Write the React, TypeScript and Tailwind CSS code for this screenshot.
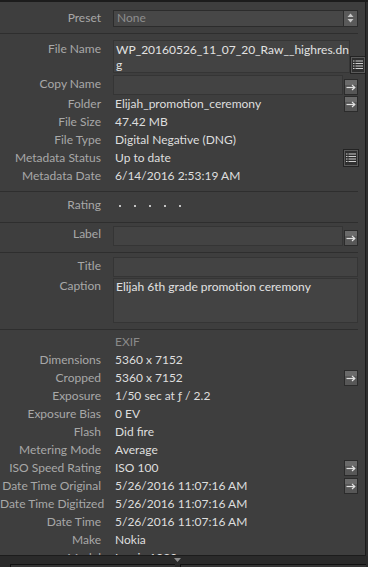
import type { ReactNode } from "react";

const font = { fontFamily: "Lato, 'Noto Sans', sans-serif" };

const ArrowButton = () => (
  <div className="flex h-[16px] w-[14px] items-center justify-center border border-[#2b2b2b] bg-[linear-gradient(#6a6a6a_0%,#6a6a6a_35%,#575757_36%,#575757_100%)]">
    <svg width="10" height="7" viewBox="0 0 10 7">
      <path d="M0.5 3.5H8.5" stroke="#e2e2e2" strokeWidth="1.2" />
      <path d="M6 1L8.8 3.5L6 6" stroke="#e2e2e2" strokeWidth="1.2" fill="none" />
    </svg>
  </div>
);

const ListButton = () => (
  <div className="flex h-[16px] w-[14px] items-center justify-center border border-[#5a5a5a] bg-[#2f2f2f] outline outline-1 outline-[#232323]">
    <svg width="10" height="10" viewBox="0 0 10 10">
      {[1, 3.5, 6, 8.5].map((y) => (
        <g key={y}>
          <rect x="0" y={y - 0.5} width="1.5" height="1" fill="#cfcfcf" />
          <rect x="2.5" y={y - 0.5} width="7.5" height="1" fill="#cfcfcf" />
        </g>
      ))}
    </svg>
  </div>
);

const Divider = () => <div className="h-px bg-[#2e2e2e]" />;

const Row = ({ label, children, icon }: { label: string; children?: ReactNode; icon?: ReactNode }) => (
  <div className="flex h-[18px] items-center">
    <div className="w-[101px] shrink-0 whitespace-nowrap text-right text-[#a8a8a8]">{label}</div>
    <div className="ml-[14px] flex-1 whitespace-nowrap text-[#dedede]">{children}</div>
    <div className="flex w-[14px] shrink-0 justify-center">{icon}</div>
  </div>
);

const rows: [string, string, ReactNode?][] = [
  ["Dimensions", "5360 x 7152"],
  ["Cropped", "5360 x 7152", <ArrowButton />],
  ["Exposure", "1/50 sec at ƒ / 2.2"],
  ["Exposure Bias", "0 EV"],
  ["Flash", "Did fire"],
  ["Metering Mode", "Average"],
  ["ISO Speed Rating", "ISO 100", <ArrowButton />],
  ["Date Time Original", "5/26/2016 11:07:16 AM", <ArrowButton />],
  ["Date Time Digitized", "5/26/2016 11:07:16 AM"],
  ["Date Time", "5/26/2016 11:07:16 AM"],
  ["Make", "Nokia"],
  ["Model", "Lumia 1020"],
];

export default function App() {
  return (
    <div className="flex h-[567px] w-[368px] flex-col overflow-hidden bg-[#2e2e2e] text-[12px]" style={font}>
      <div className="h-[2px] shrink-0 bg-[#1c1c1c]" />
      <div className="h-[554px] w-[366px] shrink-0 overflow-hidden border-r border-b border-[#1c1c1c] bg-[#3e3e3e] pr-[7px]">
        {/* preset */}
        <div className="flex h-[31px] items-center pt-px">
          <div className="w-[101px] text-right text-[#a8a8a8]">Preset</div>
          <div className="ml-[12px] flex h-[17px] flex-1 items-center border border-[#2c2c2c] bg-[#474747]">
            <span className="flex-1 pl-[3px] text-[#8e8e8e]">None</span>
            <div className="flex h-full w-[14px] items-center justify-center border-l border-[#2c2c2c] bg-[#5a5a5a]">
              <svg width="7" height="10" viewBox="0 0 7 10">
                <path d="M3.5 0.5L6.5 4H0.5Z" fill="#c8c8c8" />
                <path d="M3.5 9.5L6.5 6H0.5Z" fill="#c8c8c8" />
              </svg>
            </div>
          </div>
        </div>
        <Divider />

        {/* file */}
        <div className="pt-[6px] pb-[6px]">
          <div className="flex">
            <div className="w-[101px] shrink-0 pt-[1px] text-right leading-[15px] text-[#a8a8a8]">File Name</div>
            <div className="ml-[12px] h-[33px] flex-1 border border-[#353535] bg-[#434343] pt-px pl-[2px] leading-[15px] text-[#e2e2e2]">
              WP_20160526_11_07_20_Raw__highres.dn
              <br />g
            </div>
            <div className="ml-px flex w-[14px] shrink-0 items-end">
              <ListButton />
            </div>
          </div>
          <div className="mt-[2px] flex">
            <div className="w-[101px] shrink-0 pt-[1px] text-right leading-[15px] text-[#a8a8a8]">Copy Name</div>
            <div className="ml-[12px] h-[20px] flex-1 border border-[#353535] bg-[#434343]" />
            <div className="ml-px flex w-[14px] shrink-0 items-end">
              <ArrowButton />
            </div>
          </div>
          <Row label="Folder" icon={<ArrowButton />}>
            Elijah_promotion_ceremony
          </Row>
          <Row label="File Size">47.42 MB</Row>
          <Row label="File Type">Digital Negative (DNG)</Row>
          <Row label="Metadata Status" icon={<ListButton />}>
            Up to date
          </Row>
          <Row label="Metadata Date">6/14/2016 2:53:19 AM</Row>
        </div>
        <Divider />

        {/* rating */}
        <div className="flex h-[30px] items-center pb-[5px]">
          <div className="w-[101px] text-right text-[#a8a8a8]">Rating</div>
          <div className="ml-[18px] flex gap-[13px] pt-[3px]">
            {[0, 1, 2, 3, 4].map((i) => (
              <span key={i} className="h-[2px] w-[2px] bg-[#c4c4c4]" />
            ))}
          </div>
        </div>
        <Divider />

        {/* label */}
        <div className="flex h-[29px] items-start pt-[3px]">
          <div className="w-[101px] shrink-0 text-right leading-[15px] text-[#a8a8a8]">Label</div>
          <div className="ml-[12px] h-[20px] flex-1 border border-[#353535] bg-[#434343]" />
          <div className="ml-px flex h-[20px] w-[14px] shrink-0 items-end">
            <ArrowButton />
          </div>
        </div>
        <Divider />

        {/* title / caption */}
        <div className="flex flex-col gap-px pt-[4px] pb-[6px]">
          <div className="flex">
            <div className="w-[101px] shrink-0 pt-[1px] text-right leading-[15px] text-[#a8a8a8]">Title</div>
            <div className="ml-[12px] h-[20px] flex-1 border border-[#353535] bg-[#434343]" />
          </div>
          <div className="flex">
            <div className="w-[101px] shrink-0 text-right leading-[15px] text-[#a8a8a8]">Caption</div>
            <div className="ml-[12px] h-[45px] flex-1 border border-[#353535] bg-[#434343] pl-[2px] leading-[15px] text-[#e2e2e2]">
              Elijah 6th grade promotion ceremony
            </div>
          </div>
        </div>
        <Divider />

        {/* exif */}
        <div className="pt-[3px]">
          <div className="flex h-[18px] items-center pl-[115px] text-[#8a8a8a]">EXIF</div>
          {rows.map(([label, value, icon]) => (
            <Row key={label} label={label} icon={icon}>
              {value}
            </Row>
          ))}
        </div>
      </div>

      {/* bottom strip */}
      <div className="relative flex-1 bg-[#2a2a2a]">
        <svg className="absolute left-[174px] top-[2px]" width="7" height="4" viewBox="0 0 7 4">
          <path d="M0 0H7L3.5 4Z" fill="#8a8a8a" />
        </svg>
        <div className="absolute left-[10px] top-[8px] h-[10px] w-[165px] border-t border-l border-[#111] bg-[#353535]" />
        <div className="absolute left-[180px] top-[8px] h-[10px] w-[186px] border-t border-l border-[#111] bg-[#353535]" />
      </div>
    </div>
  );
}
